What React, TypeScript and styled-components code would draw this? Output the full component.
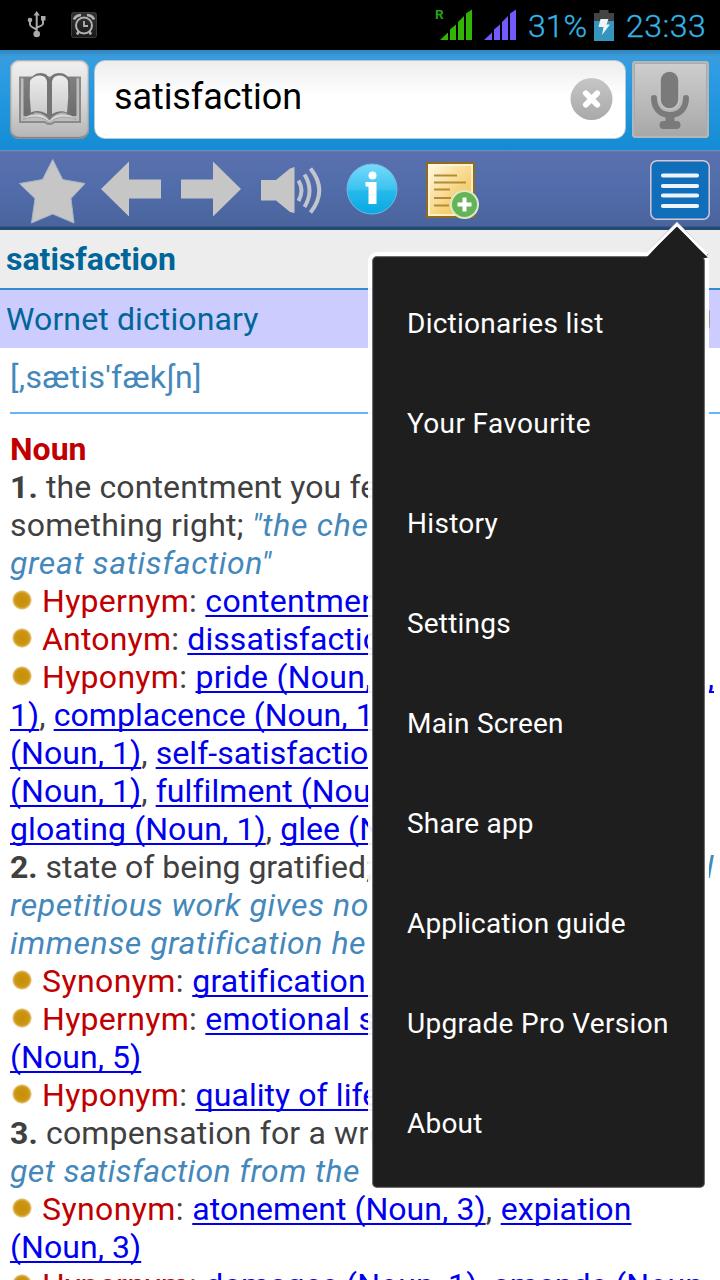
import React from 'react';
import styled, { createGlobalStyle, css } from 'styled-components';

const Global = createGlobalStyle`
  * { box-sizing: border-box; }
  body { margin: 0; background: #fff; overflow: hidden; }
`;

const Screen = styled.div`
  position: relative;
  width: 720px;
  height: 1280px;
  overflow: hidden;
  background: #fff;
  font-family: Roboto, "Noto Sans", sans-serif;
  display: flex;
  flex-direction: column;
`;

const StatusBar = styled.header`
  height: 50px;
  flex: none;
  background: #000;
  color: #33b5e5;
  display: flex;
  align-items: center;
  justify-content: space-between;
  padding: 0 11px 0 26px;
`;

const StatusGroup = styled.div<{ $gap: number }>`
  display: flex;
  align-items: center;
  gap: ${(p) => p.$gap}px;
  svg { flex: none; display: block; }
`;

const StatusText = styled.span<{ $width: number; $spacing: number }>`
  width: ${(p) => p.$width}px;
  font-size: 32px;
  font-weight: 300;
  line-height: 50px;
  padding-top: 2px;
  white-space: nowrap;
  letter-spacing: ${(p) => p.$spacing}px;
  -webkit-text-stroke: 0.3px currentColor;
`;

const SearchBar = styled.div`
  height: 100px;
  flex: none;
  display: flex;
  align-items: flex-start;
  padding: 10px 10px 0 10px;
  background: linear-gradient(#2d86bd 0, #3a9bdb 6px, #2f9de3 20px, #1d94dc 65px, #148cd4 100%);
`;

const SquareButton = styled.button<{ $kind: 'book' | 'mic' }>`
  flex: none;
  border: 0;
  padding: 0;
  display: flex;
  align-items: center;
  justify-content: center;
  ${(p) => p.$kind === 'book'
    ? css`
      width: 79px;
      height: 79px;
      border-radius: 9px;
      background: linear-gradient(#f1f1f1, #d6d6d6 55%, #b4b4b4);
      box-shadow: inset 0 0 2px 1px #999, inset 0 -2px 1px #777;
    `
    : css`
      width: 77px;
      height: 77px;
      margin: 1px 0 0 6px;
      padding-right: 2px;
      border-radius: 4px;
      background: linear-gradient(#cfcfcf, #a7a7a7);
      box-shadow: inset 0 0 0 2px #b3b7ba, inset 0 0 0 3px #aaa, 0 0 1px #5687a6;
    `}
`;

const SearchField = styled.div`
  width: 532px;
  height: 79px;
  margin-left: 5px;
  border: 1px solid #b8c8d2;
  border-radius: 11px;
  background: linear-gradient(#ededed, #fff 45%);
  display: flex;
  align-items: center;
  justify-content: space-between;
  padding: 0 12px 2px 19px;
`;

const Query = styled.span`
  font-size: 36px;
  line-height: 42px;
  color: #000;
  padding-bottom: 3px;
  letter-spacing: -0.1px;
`;

const Toolbar = styled.nav`
  height: 80px;
  flex: none;
  background: linear-gradient(#7793bb 0, #5a70ae 2px, #526dab 35px, #4a649d 76px, #2f4674 77px, #145078 80px);
  display: flex;
  align-items: flex-start;
  padding-left: 18px;
  svg { display: block; flex: none; }
`;

const Tool = styled.span<{ $left: number; $top: number }>`
  margin-left: ${(p) => p.$left}px;
  margin-top: ${(p) => p.$top}px;
`;

const WordTitle = styled.h1`
  margin: 0;
  height: 60px;
  flex: none;
  background: #ededed;
  border-bottom: 2px solid #3388d8;
  color: #069;
  font-size: 32px;
  font-weight: 700;
  line-height: 58px;
  padding-left: 6px;
`;

const DictBar = styled.div`
  height: 58px;
  flex: none;
  background: #ccf;
  color: #069;
  font-size: 32px;
  line-height: 58px;
  padding: 0 10px 0 6px;
  letter-spacing: 0.12px;
  display: flex;
  justify-content: space-between;
  align-items: center;
`;

const Toggle = styled.i`
  width: 10px;
  height: 20px;
  border-radius: 3px;
  background: #999;
`;

const Phonetic = styled.div`
  height: 66px;
  flex: none;
  margin-left: 10px;
  border-bottom: 2px solid #66b5ff;
  color: #4488bb;
  font-size: 32px;
  line-height: 58px;
  letter-spacing: 0.3px;
`;

const Article = styled.main`
  padding: 16px 6px 0 10px;
  font-size: 32px;
  line-height: 38px;
  color: #404040;
`;

const Line = styled.div<{ $spacing?: number }>`
  height: 38px;
  white-space: pre;
  letter-spacing: ${(p) => p.$spacing ?? 0.3}px;
  display: flex;
  justify-content: space-between;
`;

const PartOfSpeech = styled.b`
  color: #c00000;
  letter-spacing: 0;
`;
const Example = styled.em<{ $spacing?: number }>`
  color: #4488bb;
  letter-spacing: ${(p) => p.$spacing ?? 0.57}px;
`;
const Relation = styled.span`color: #c00000;`;
const Ref = styled.a<{ $spacing?: number }>`
  color: #0000ee;
  letter-spacing: ${(p) => p.$spacing ?? 0.06}px;
  text-decoration: underline;
  text-decoration-thickness: 2px;
  text-underline-offset: 3px;
  text-decoration-skip-ink: none;
`;

const Bullet = styled.i`
  display: inline-block;
  width: 20px;
  height: 20px;
  margin: 0 10px 0 2px;
  vertical-align: 2px;
  border-radius: 50%;
  background: radial-gradient(circle closest-side, #c58f08 0, #cc9612 70%, rgba(210, 160, 40, 0.8) 85%, rgba(225, 185, 90, 0.4) 97%, transparent 100%);
`;

const MenuPanel = styled.ul`
  position: absolute;
  left: 368px;
  top: 252px;
  width: 341px;
  height: 940px;
  margin: 0;
  padding: 18px 0 0 35px;
  list-style: none;
  background: #1e1e1e;
  background-clip: padding-box;
  border: 4px solid rgba(255, 255, 255, 0.92);
  border-radius: 9px;
  box-shadow: inset 0 0 1px 1px #777;
`;

const MenuItem = styled.li<{ $spacing: number }>`
  height: 100px;
  line-height: 100px;
  font-size: 28px;
  color: #fff;
  white-space: nowrap;
  letter-spacing: ${(p) => p.$spacing}px;
`;

const MenuArrow = styled.svg`
  position: absolute;
  left: 640px;
  top: 220px;
`;

const MENU: [string, number][] = [
  ['Dictionaries list', 0.26],
  ['Your Favourite', 0.36],
  ['History', 0.3],
  ['Settings', 0.2],
  ['Main Screen', 0.2],
  ['Share app', 0.2],
  ['Application guide', 0.15],
  ['Upgrade Pro Version', 0.34],
  ['About', 0.2],
];

const Usb = () => (
  <svg width="22" height="28" viewBox="0 0 22 28" fill="none" stroke="#aaa" strokeWidth="2">
    <path d="M10.700 3V23M4 10v3.500q0 2 6.700 5M17 9v3.500q0 2-6.300 4" />
    <path d="M7.500 4.500 10.700 0l3.200 4.500zM15 5h4.500v4.500H15z" fill="#aaa" stroke="none" />
    <circle cx="4" cy="9" r="2.300" fill="#aaa" stroke="none" />
    <circle cx="10.700" cy="23" r="3.300" fill="#aaa" stroke="none" />
  </svg>
);

const Alarm = () => (
  <svg width="26" height="26" viewBox="0 0 26 26" fill="none" stroke="#b2b2b2">
    <defs>
      <linearGradient id="alarmBg" x2="0" y2="1"><stop stopColor="#333" /><stop offset="1" stopColor="#191919" /></linearGradient>
    </defs>
    <rect x=".5" y=".5" width="25" height="25" rx="2" fill="url(#alarmBg)" stroke="#3a3a3a" />
    <circle cx="13" cy="13.500" r="8" strokeWidth="2" />
    <path d="M13 9v5h4" strokeWidth="1.800" />
    <path d="M3 7.500Q4.500 3.500 10 3M23 7.500Q21.500 3.500 16 3M8 19l-2 3.500M18 19l2 3.500" strokeWidth="2.600" />
  </svg>
);

const Signal = ({ color, roaming }: { color: string; roaming?: boolean }) => (
  <svg width={roaming ? 38 : 32} height="36" viewBox={roaming ? '-6 -1 38 36' : '0 -1 32 36'} fill={color}>
    {roaming && <text x="-5" y="11" fontSize="13.500" fontWeight="700" fontFamily="Roboto, sans-serif" fill="#25a01c">R</text>}
    <path d="M0 32 8 24.500V32zM10 32V21.500L16 16.500V32zM18 32V14L24 8V32zM26 32V5.500L32 1.500V32z" />
  </svg>
);

const Battery = () => (
  <svg width="20" height="32" viewBox="0 0 20 32">
    <path d="M5.500 1h9v3H20v8H0V4h5.500z" fill="#444" />
    <path d="M0 12h20v20H0z" fill="#3595bd" />
    <path d="M6.500 10h8l-2 5.500h3.500L8 26l1.500-8H4.500z" fill="#eef4f6" />
  </svg>
);

const Book = () => (
  <svg width="63" height="56" viewBox="0 0 63 56" fill="none">
    <defs>
      <linearGradient id="page" x2="0" y2="1"><stop stopColor="#ececec" /><stop offset="1" stopColor="#cbcbcb" /></linearGradient>
      <linearGradient id="cover" x2="0" y2="1"><stop stopColor="#808080" /><stop offset="1" stopColor="#6c6c6c" /></linearGradient>
    </defs>
    <path d="M2 5.500h60V50H36.500q-5 4-10 0H2z" fill="#bdbdbd" stroke="#8a8a8a" strokeWidth="2" />
    <path d="M5.500 5h10v39h-10zM48.500 5h10v39h-10z" fill="url(#cover)" />
    <path d="M12 10Q14 1 23 1q6 0 8.500 6Q34 1 41 1q9 0 11 9v32q-12-5-20.500 6Q23 37 12 42z" fill="#747474" />
    <path d="M5 47.500q4-5 12-5.500 8-1.500 14.500 6.500Q38 40.500 46 42q8 .5 12.500 5.500-10-3.500-17-2-6 1-10 5-4-4-10-5-7-1.500-16.500 2z" fill="#d8d8d8" stroke="#9a9a9a" strokeWidth=".8" />
    <path d="M12 9Q15 3.500 22 3.500q6 0 7 6V42Q21 37 13 40.500q-2-16-1-31.500zM34 9.500q1-6 7-6 7 0 9 5.500 1 16-1 31.500-8-3-15 1.500z" fill="url(#page)" />
  </svg>
);

const Clear = () => (
  <svg width="43" height="44" viewBox="0 0 43 44">
    <defs><linearGradient id="clearBg" x2="0" y2="1"><stop stopColor="#c6c6c6" /><stop offset="1" stopColor="#a9a9a9" /></linearGradient></defs>
    <circle cx="21.500" cy="22" r="21" fill="url(#clearBg)" />
    <path d="m15.800 16.300 11.400 11.400m0-11.400-11.400 11.400" stroke="#fff" strokeWidth="5.800" strokeLinecap="round" />
  </svg>
);

const Mic = () => (
  <svg width="42" height="62" viewBox="0 0 42 62" fill="none">
    <rect x="11" y="2" width="19" height="38" rx="9.500" fill="#7a7a7a" stroke="#c6c6c6" strokeWidth="1.500" />
    <path d="M5 29c0 10 6 17 16 17s16-7 16-17" stroke="#7a7a7a" strokeWidth="6" strokeLinecap="round" />
    <path d="M21 45v10" stroke="#7a7a7a" strokeWidth="9" />
    <rect x="10.500" y="52" width="21" height="8" rx="4" fill="#7a7a7a" />
  </svg>
);

const Star = () => (
  <svg width="68" height="68" viewBox="0 0 68 68">
    <path d="M34.700 2.500 44.700 22.500 67 26.500 53 41.500 56 66 34.700 57 13.500 66 17 41.500 1.500 26.500 24.500 22.500z" fill="#c6c6c6" stroke="#a9b3cb" strokeWidth="1" strokeLinejoin="round" />
  </svg>
);

const Arrow = ({ right }: { right?: boolean }) => (
  <svg width="60" height="56" viewBox="0 0 60 56">
    <path d={right ? 'M60 28 32 0.500V18.500H0V37.500H32V55.500z' : 'M0 28 28 0.500V18.500H60V37.500H28V55.500z'} fill="#c6c6c6" />
  </svg>
);

const Speaker = () => (
  <svg width="62" height="48" viewBox="0 0 62 48" fill="none" stroke="#c2c5cc">
    <path d="M0 14h15L29 2.500 33.500 1V47L29 46 15 34.500H0z" fill="#c6c6c6" stroke="none" />
    <path d="M37.500 14.500Q43.500 24.500 37.500 35M43.500 8.500Q53.500 24.500 43.500 41M49.500 2.500Q67 24.500 49.500 46.500" strokeWidth="4" />
  </svg>
);

const Info = () => (
  <svg width="52" height="52" viewBox="0 0 52 52">
    <defs><linearGradient id="infoBg" x2="0" y2="1"><stop stopColor="#79dafd" /><stop offset=".5" stopColor="#3bc3ef" /><stop offset=".55" stopColor="#25b9eb" /><stop offset="1" stopColor="#08a8e2" /></linearGradient></defs>
    <circle cx="26" cy="26" r="25" fill="url(#infoBg)" stroke="#72b8df" />
    <circle cx="26.500" cy="12.500" r="4" fill="#fff" />
    <path d="M19.500 19h11v22h-8V23.500h-3z" fill="#fff" />
  </svg>
);

const Note = () => (
  <svg width="54" height="58" viewBox="0 0 54 58">
    <defs><linearGradient id="noteBg" x2="1" y2="1"><stop stopColor="#fffbea" /><stop offset=".6" stopColor="#f7d27a" /><stop offset="1" stopColor="#f3c456" /></linearGradient></defs>
    <rect x="2" y="2" width="47" height="54" fill="url(#noteBg)" stroke="#906c20" strokeWidth="2" />
    <rect x="4" y="4" width="43" height="50" fill="none" stroke="#fff8dc" strokeWidth="1.500" />
    <path d="M9 14.500h23M9 21.500h32M9 28.500h16M9 37h17M9 44.500h15" stroke="#b38c37" strokeWidth="2" />
    <circle cx="39.500" cy="43.500" r="13.500" fill="#64b356" stroke="#dce9c8" strokeWidth="2" />
    <path d="M39.500 36.500v14M32.500 43.500h14" stroke="#fff" strokeWidth="4" />
  </svg>
);

const MenuIcon = () => (
  <svg width="60" height="60" viewBox="0 0 60 60">
    <rect x=".8" y=".8" width="58.400" height="58.400" rx="6" fill="#106eba" stroke="#d3c8d4" strokeWidth="1.500" />
    <path d="M13 15.500h34M13 26h34M13 35.500h34M13 46h34" stroke="#edf4fb" strokeWidth="4.200" strokeLinecap="round" />
  </svg>
);

export default function App() {
  return (
    <Screen>
      <Global />
      <StatusBar>
        <StatusGroup $gap={23}><Usb /><Alarm /></StatusGroup>
        <StatusGroup $gap={12}>
          <Signal color="#31b404" roaming />
          <Signal color="#7459ff" />
          <StatusGroup $gap={8}>
            <StatusText $width={58} $spacing={0}>31%</StatusText>
            <Battery />
          </StatusGroup>
          <StatusText $width={83} $spacing={0.5}>23:33</StatusText>
        </StatusGroup>
      </StatusBar>
      <SearchBar>
        <SquareButton $kind="book" aria-label="Dictionary"><Book /></SquareButton>
        <SearchField><Query>satisfaction</Query><Clear /></SearchField>
        <SquareButton $kind="mic" aria-label="Voice"><Mic /></SquareButton>
      </SearchBar>
      <Toolbar>
        <Tool $left={0} $top={7}><Star /></Tool>
        <Tool $left={15} $top={11}><Arrow /></Tool>
        <Tool $left={20} $top={11}><Arrow right /></Tool>
        <Tool $left={20} $top={16}><Speaker /></Tool>
        <Tool $left={23} $top={13}><Info /></Tool>
        <Tool $left={27} $top={11}><Note /></Tool>
        <Tool $left={171} $top={10}><MenuIcon /></Tool>
      </Toolbar>
      <WordTitle>satisfaction</WordTitle>
      <DictBar>Wornet dictionary<Toggle /></DictBar>
      <Phonetic>[,sætis'fækʃn]</Phonetic>
      <Article>
        <Line><PartOfSpeech>Noun</PartOfSpeech></Line>
        <Line $spacing={0.12}><span><b>1.</b> the contentment you fe</span></Line>
        <Line $spacing={0.18}><span>something right; <Example $spacing={0.7}>"the che</Example></span></Line>
        <Line><Example $spacing={0.6}>great satisfaction"</Example></Line>
        <Line><span><Bullet /><Relation>Hypernym</Relation>: <Ref $spacing={0.3}>contentmen</Ref></span></Line>
        <Line $spacing={0.2}><span><Bullet /><Relation>Antonym</Relation>: <Ref>dissatisfactio</Ref></span></Line>
        <Line><span><Bullet /><Relation>Hyponym</Relation>: <Ref $spacing={0.25}>pride (Noun,</Ref></span><Ref>,</Ref></Line>
        <Line $spacing={0.1}><span><Ref>1)</Ref>, <Ref>complacence (Noun, 1</Ref></span></Line>
        <Line $spacing={0.1}><span><Ref>(Noun, 1)</Ref>, <Ref>self-satisfactio</Ref></span></Line>
        <Line $spacing={0.1}><span><Ref>(Noun, 1)</Ref>, <Ref>fulfilment (Nou</Ref></span></Line>
        <Line $spacing={0.1}><span><Ref $spacing={0.1}>gloating (Noun, 1)</Ref>, <Ref>glee (N</Ref></span></Line>
        <Line $spacing={-0.03}><span><b>2.</b> state of being gratified;</span><Example>l</Example></Line>
        <Line><Example>repetitious work gives no</Example></Line>
        <Line><Example $spacing={0.53}>immense gratification he</Example></Line>
        <Line $spacing={0.4}><span><Bullet /><Relation>Synonym</Relation>: <Ref $spacing={0.2}>gratification </Ref></span></Line>
        <Line><span><Bullet /><Relation>Hypernym</Relation>: <Ref $spacing={0.25}>emotional s</Ref></span></Line>
        <Line><Ref>(Noun, 5)</Ref></Line>
        <Line><span><Bullet /><Relation>Hyponym</Relation>: <Ref>quality of life</Ref></span></Line>
        <Line $spacing={0.15}><span><b>3.</b> compensation for a wro</span></Line>
        <Line><Example $spacing={0.38}>get satisfaction from the</Example></Line>
        <Line $spacing={0.4}><span><Bullet /><Relation>Synonym</Relation>: <Ref>atonement (Noun, 3)</Ref>, <Ref>expiation</Ref></span></Line>
        <Line><Ref>(Noun, 3)</Ref></Line>
        <Line><span><Bullet /><Relation>Hypernym</Relation>: <Ref>damages (Noun, 1)</Ref>, <Ref>amends (Noun,</Ref></span></Line>
      </Article>
      <MenuPanel>
        {MENU.map(([label, spacing]) => <MenuItem key={label} $spacing={spacing}>{label}</MenuItem>)}
      </MenuPanel>
      <MenuArrow width="75" height="40" viewBox="0 0 75 40">
        <path d="M5 35 37 3 68 35" fill="none" stroke="#bbb" strokeWidth="2" />
        <path d="M6 38 37 5 67 38z" fill="#1e1e1e" />
        <path d="M0 34.300H6.500L37 4.500 67 34.300" fill="none" stroke="#fff" strokeWidth="3" />
        <path d="M9 37.500 37 8.500 68 37.500z" fill="#1e1e1e" />
      </MenuArrow>
    </Screen>
  );
}
